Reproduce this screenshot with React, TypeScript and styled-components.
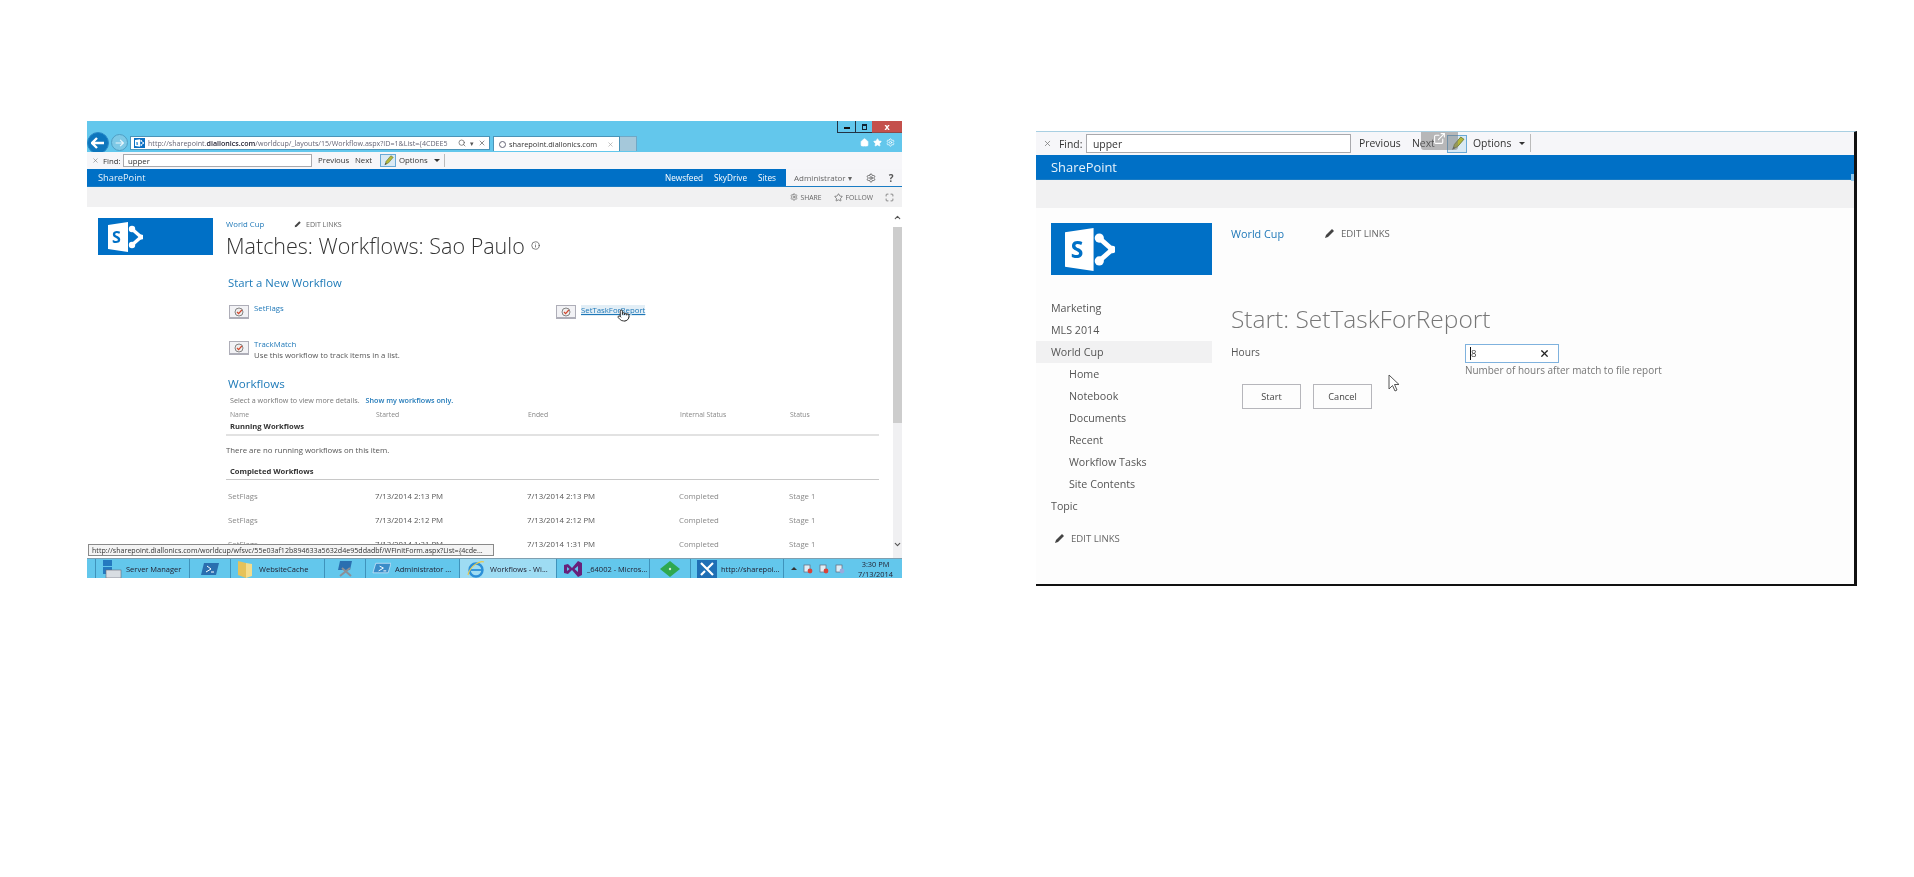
import React from 'react';
import styled, { createGlobalStyle } from 'styled-components';
import { Home, Star, Settings, Search, X, Pointer, ChevronUp, ChevronDown, Info, Maximize, ExternalLink } from 'lucide-react';

const GlobalStyle = createGlobalStyle`
  html, body {
    margin: 0;
    padding: 0;
    background: #fff;
  }
  * {
    box-sizing: border-box;
  }
`;

const Page = styled.div`
  width: 1914px;
  height: 877px;
  overflow: hidden;
  display: flex;
  align-items: flex-start;
  gap: 134px;
  padding: 121px 0 0 87px;
  font-family: 'Open Sans', 'Liberation Sans', sans-serif;
  color: #444;
`;

const LeftShot = styled.div`
  position: relative;
  width: 815px;
  height: 457px;
  flex: none;
  display: flex;
  flex-direction: column;
  overflow: hidden;
  background: #fff;
  filter: blur(0.3px);
`;

const RightShot = styled.div`
  position: relative;
  width: 821px;
  height: 455px;
  margin-top: 10px;
  flex: none;
  display: flex;
  flex-direction: column;
  overflow: hidden;
  background: #fdfdfd;
  border-top: 1px solid #a9cfe2;
  border-right: 3px solid #111;
  border-bottom: 2px solid #111;
  filter: blur(0.3px);
`;

/* browser chrome */
const Chrome = styled.div`
  height: 31px;
  flex: none;
  background: #63c7ec;
  display: flex;
  flex-direction: column;
`;

const CaptionRow = styled.div`
  height: 12px;
  display: flex;
  justify-content: flex-end;
`;

const WinButton = styled.div<{ $width: number; $close?: boolean }>`
  width: ${(p) => p.$width}px;
  height: 12px;
  display: flex;
  align-items: center;
  justify-content: center;
  font-size: 9px;
  font-weight: 700;
  color: ${(p) => (p.$close ? '#fff' : '#111')};
  background: ${(p) => (p.$close ? '#c4504c' : 'transparent')};
  border-left: ${(p) => (p.$close ? 'none' : '1px solid #234')};
  border-bottom: 1px solid ${(p) => (p.$close ? '#8d4a4a' : '#234')};
`;

const MinGlyph = styled.span`
  width: 6px;
  height: 2px;
  margin-top: 3px;
  background: #111;
`;

const RestoreGlyph = styled.span`
  width: 5px;
  height: 6px;
  border: 1px solid #123;
  border-top-width: 2px;
`;

const NavRow = styled.div`
  height: 19px;
  display: flex;
  align-items: center;
`;

const BackCircle = styled.div`
  width: 22px;
  height: 22px;
  margin: 0 2px 0 0;
  border-radius: 50%;
  background: #0d76bd;
  border: 1px solid #2a8ac8;
  color: #fff;
  display: flex;
  align-items: center;
  justify-content: center;
  flex: none;
`;

const ForwardCircle = styled.div`
  width: 17px;
  height: 17px;
  border-radius: 50%;
  background: #7ec9e6;
  border: 1px solid #4f9fc4;
  color: #d8f0fa;
  display: flex;
  align-items: center;
  justify-content: center;
  flex: none;
  margin-right: 2px;
`;

const AddressBar = styled.div`
  width: 360px;
  height: 14px;
  flex: none;
  background: #fff;
  border: 1px solid #4b94b8;
  display: flex;
  align-items: center;
  gap: 1px;
  padding: 0 3px;
  font-size: 7.1px;
  color: #667;
  white-space: nowrap;
  overflow: hidden;
`;

const AddressText = styled.span`
  flex: 1;
  overflow: hidden;
  b {
    color: #223;
    font-weight: 600;
  }
`;

const AddressTools = styled.span`
  display: flex;
  align-items: center;
  gap: 4px;
  color: #555;
`;

const BrowserTab = styled.div`
  width: 127px;
  height: 15px;
  margin: 2px 0 0 3px;
  flex: none;
  background: #fff;
  border: 1px solid #4b94b8;
  border-bottom: none;
  display: flex;
  align-items: center;
  padding: 0 5px;
  gap: 3px;
  font-size: 7.4px;
  color: #333;
  white-space: nowrap;
`;

const TabClose = styled.span`
  margin-left: auto;
  color: #999;
  display: flex;
`;

const Spinner = styled.span`
  width: 7px;
  height: 7px;
  border: 1px solid #667;
  border-radius: 50%;
`;

const NewTab = styled.div`
  width: 17px;
  height: 15px;
  margin-top: 2px;
  flex: none;
  background: #a5c8da;
  border: 1px solid #6fa8c6;
  border-bottom: none;
  border-left: none;
`;

const ChromeIcons = styled.div`
  margin-left: auto;
  display: flex;
  gap: 4px;
  padding-right: 7px;
  color: #fff;
`;

/* find bar */
const FindRow = styled.div<{ $big?: boolean }>`
  height: ${(p) => (p.$big ? 23 : 17)}px;
  flex: none;
  background: #f6f6f9;
  display: flex;
  align-items: center;
  padding-left: ${(p) => (p.$big ? 7 : 5)}px;
  font-size: ${(p) => (p.$big ? 10.4 : 7.8)}px;
  color: #333;
  white-space: nowrap;
`;

const FindClose = styled.span<{ $big?: boolean }>`
  width: ${(p) => (p.$big ? 16 : 11)}px;
  color: #777;
  display: flex;
`;

const FindLabel = styled.span<{ $big?: boolean }>`
  width: ${(p) => (p.$big ? 27 : 20)}px;
`;

const FindInput = styled.div<{ $big?: boolean }>`
  width: ${(p) => (p.$big ? 265 : 189)}px;
  height: ${(p) => (p.$big ? 19 : 13)}px;
  margin-right: ${(p) => (p.$big ? 8 : 6)}px;
  background: #fff;
  border: 1px solid #a9a9ad;
  display: flex;
  align-items: center;
  padding-left: ${(p) => (p.$big ? 6 : 4)}px;
`;

const FindAction = styled.span<{ $width: number }>`
  width: ${(p) => p.$width}px;
  flex: none;
  margin-bottom: 1px;
`;

const PencilButton = styled.span<{ $big?: boolean }>`
  width: ${(p) => (p.$big ? 20 : 16)}px;
  height: ${(p) => (p.$big ? 18 : 13)}px;
  margin-right: ${(p) => (p.$big ? 6 : 3)}px;
  flex: none;
  display: flex;
  align-items: center;
  justify-content: center;
  background: #d9e9f4;
  border: 1px solid #6aa9d6;
`;

const OptionsLabel = styled.span<{ $big?: boolean }>`
  display: flex;
  align-items: center;
  gap: ${(p) => (p.$big ? 8 : 6)}px;
  padding-right: ${(p) => (p.$big ? 5 : 4)}px;
  height: ${(p) => (p.$big ? 18 : 13)}px;
  margin-bottom: 1px;
  border-right: 1px solid #bbb;
`;

const Caret = styled.span<{ $up?: boolean }>`
  width: 0;
  height: 0;
  border-left: 3px solid transparent;
  border-right: 3px solid transparent;
  ${(p) => (p.$up ? 'border-bottom: 3px solid #333;' : 'border-top: 3px solid #333;')}
`;

/* suite bars */
const SuiteBar = styled.div<{ $big?: boolean }>`
  height: ${(p) => (p.$big ? 25 : 18)}px;
  flex: none;
  background: #0070c6;
  border-bottom: 1px solid #1a7cc4;
  color: #e8f3fb;
  display: flex;
  align-items: stretch;
  padding-left: ${(p) => (p.$big ? 15 : 11)}px;
  font-size: ${(p) => (p.$big ? 12.9 : 9.3)}px;
`;

const SuiteBrand = styled.div`
  display: flex;
  align-items: center;
  flex: 1;
`;

const SuiteLinks = styled.div`
  display: flex;
  align-items: center;
  gap: 11px;
  padding-right: 10px;
  font-size: 8.2px;
  font-weight: 500;
  color: #fff;
`;

const UserArea = styled.div`
  width: 116px;
  background: #f5f5f8;
  color: #666;
  display: flex;
  align-items: center;
  font-size: 8px;
  padding-left: 8px;
`;

const UserTail = styled.span`
  margin-left: 14px;
  display: flex;
  align-items: center;
  gap: 13px;
  color: #555;
  font-weight: 700;
  font-size: 10px;
`;

const GreyBar = styled.div<{ $big?: boolean }>`
  height: ${(p) => (p.$big ? 28 : 20)}px;
  flex: none;
  background: #f1f1f2;
  display: flex;
  align-items: center;
  justify-content: flex-end;
  gap: 12px;
  padding-right: 8px;
  font-size: 6.8px;
  color: #666;
`;

const GreyAction = styled.span`
  display: flex;
  align-items: center;
  gap: 3px;
`;

/* left page content */
const LeftBody = styled.div`
  flex: 1;
  min-height: 0;
  display: flex;
  overflow: hidden;
`;

const LeftAside = styled.div`
  width: 139px;
  flex: none;
  padding: 11px 0 0 11px;
`;

const LogoBox = styled.div<{ $width: number; $height: number; $pad: number }>`
  width: ${(p) => p.$width}px;
  height: ${(p) => p.$height}px;
  padding-left: ${(p) => p.$pad}px;
  background: #0070c6;
  display: flex;
  align-items: center;
`;

const LeftMain = styled.div`
  width: 653px;
  flex: none;
  font-size: 7.8px;
  color: #555;
`;

const Crumbs = styled.div<{ $big?: boolean }>`
  height: ${(p) => (p.$big ? 14 : 12)}px;
  margin-top: ${(p) => (p.$big ? 18 : 11)}px;
  display: flex;
  align-items: center;
  font-size: ${(p) => (p.$big ? 10.8 : 7.8)}px;
  white-space: nowrap;
`;

const CrumbLink = styled.span<{ $width: number }>`
  width: ${(p) => p.$width}px;
  color: #1f78b8;
  font-weight: 500;
  flex: none;
`;

const EditLinks = styled.span<{ $big?: boolean }>`
  display: flex;
  align-items: center;
  gap: ${(p) => (p.$big ? 5 : 4)}px;
  color: #666;
  font-size: ${(p) => (p.$big ? 9.6 : 7)}px;
`;

const PageTitle = styled.h1`
  height: 30px;
  margin: 0;
  display: flex;
  align-items: center;
  gap: 6px;
  font-size: 21.5px;
  font-weight: 300;
  color: #333;
  white-space: nowrap;
`;

const SectionTitle = styled.h2<{ $gap: number; $size: number }>`
  height: 16px;
  margin: ${(p) => p.$gap}px 0 0;
  padding-left: 2px;
  display: flex;
  align-items: center;
  font-size: ${(p) => p.$size}px;
  font-weight: 400;
  color: #1e7ab8;
`;

const WorkflowGrid = styled.div`
  margin-top: 15px;
  padding-left: 3px;
  display: grid;
  grid-template-columns: 327px 1fr;
  grid-template-rows: 36px 28px;
`;

const WorkflowItem = styled.div`
  display: flex;
  gap: 5px;
  align-items: flex-start;
`;

const WorkflowIcon = styled.span`
  width: 20px;
  height: 14px;
  flex: none;
  background: #f2f2f5;
  border: 1px solid #aeaeb8;
  border-bottom-width: 2px;
  display: flex;
  align-items: center;
  justify-content: center;
`;

const WorkflowText = styled.div`
  line-height: 11px;
  font-size: 7.8px;
`;

const WorkflowLink = styled.div<{ $hover?: boolean }>`
  color: #1f78b8;
  margin-top: -2px;
  ${(p) => p.$hover && 'text-decoration: underline; background: #e2eef6; display: inline-block;'}
`;

const Hint = styled.div`
  height: 12px;
  margin-top: 3px;
  padding-left: 4px;
  display: flex;
  align-items: center;
  gap: 6px;
  font-size: 7.2px;
  color: #777;
`;

const HintLink = styled.span`
  color: #1f78b8;
  font-weight: 600;
`;

const HeadRow = styled.div`
  height: 12px;
  margin-top: 2px;
  padding-left: 4px;
  display: grid;
  grid-template-columns: 146px 152px 152px 110px 1fr;
  align-items: center;
  font-size: 6.8px;
  color: #888;
`;

const GroupHead = styled.div<{ $gap: number; $strong?: boolean }>`
  height: ${(p) => (p.$strong ? 16 : 15)}px;
  margin-top: ${(p) => p.$gap}px;
  padding: 0 0 3px 4px;
  display: flex;
  align-items: center;
  font-size: 7.6px;
  font-weight: 700;
  color: #333;
  border-bottom: ${(p) => (p.$strong ? '2px solid #e2e2e2' : '1px solid #c8c8c8')};
`;

const EmptyNote = styled.div`
  height: 12px;
  margin-top: 8px;
  display: flex;
  align-items: center;
  font-size: 7.8px;
  color: #555;
`;

const FlowRows = styled.div`
  margin-top: 4px;
`;

const FlowRow = styled.div`
  height: 24px;
  padding-left: 2px;
  display: grid;
  grid-template-columns: 147px 152px 152px 110px 1fr;
  align-items: center;
  font-size: 7.8px;
  color: #888;
`;

const DateCell = styled.span`
  color: #555;
`;

const ScrollTrack = styled.div`
  width: 9px;
  margin-left: 14px;
  flex: none;
  background: #f0f0f2;
  display: flex;
  flex-direction: column;
  align-items: center;
  color: #555;
`;

const ScrollArrow = styled.div<{ $height: number; $top?: boolean }>`
  height: ${(p) => p.$height}px;
  width: 9px;
  background: ${(p) => (p.$top ? '#fff' : 'transparent')};
  flex: none;
  display: flex;
  align-items: ${(p) => (p.$top ? 'center' : 'flex-start')};
  justify-content: center;
`;

const ScrollThumb = styled.div`
  width: 9px;
  height: 196px;
  background: #cdcdcd;
  flex: none;
`;

const ScrollGap = styled.div`
  flex: 1;
`;

const StatusTip = styled.div`
  position: absolute;
  left: 1px;
  top: 423px;
  width: 406px;
  height: 12px;
  background: #f4f4f4;
  border: 1px solid #8a8a8a;
  padding-left: 3px;
  display: flex;
  align-items: center;
  font-size: 7.1px;
  color: #333;
  white-space: nowrap;
  overflow: hidden;
`;

const HandCursor = styled.div`
  position: absolute;
  left: 530px;
  top: 188px;
  color: #111;
  display: flex;
`;

/* taskbar */
const Taskbar = styled.div`
  height: 20px;
  flex: none;
  background: #63c7ec;
  border-top: 1px solid #7f9fb0;
  padding-left: 8px;
  display: flex;
  font-size: 7.5px;
  color: #223;
  white-space: nowrap;
`;

const TaskItem = styled.div<{ $width: number; $active?: boolean; $solo?: boolean }>`
  width: ${(p) => p.$width}px;
  flex: none;
  display: flex;
  align-items: center;
  justify-content: ${(p) => (p.$solo ? 'center' : 'flex-start')};
  gap: 4px;
  padding-left: ${(p) => (p.$solo ? 0 : 6)}px;
  overflow: hidden;
  border-left: 1px solid #3f93bb;
  background: ${(p) => (p.$active ? '#9edcf3' : 'transparent')};
`;

const Tray = styled.div`
  flex: 1;
  display: flex;
  align-items: center;
  gap: 6px;
  padding-left: 7px;
  border-left: 1px solid #3f93bb;
`;

const Clock = styled.div`
  margin-left: 7px;
  text-align: center;
  line-height: 10px;
  font-size: 7.4px;
`;

/* right page content */
const RightBody = styled.div`
  flex: 1;
  min-height: 0;
  display: flex;
`;

const SideNav = styled.div`
  width: 176px;
  flex: none;
  padding-top: 15px;
`;

const SideLogo = styled.div`
  margin-left: 15px;
`;

const NavList = styled.div`
  margin-top: 22px;
`;

const NavItem = styled.div<{ $sub?: boolean; $on?: boolean }>`
  height: 22px;
  padding-left: ${(p) => (p.$sub ? 33 : 15)}px;
  display: flex;
  align-items: center;
  font-size: 10.7px;
  color: #555;
  background: ${(p) => (p.$on ? '#f1f1f2' : 'transparent')};
`;

const NavEdit = styled.div`
  height: 22px;
  margin-top: 10px;
  padding-left: 18px;
  display: flex;
  align-items: center;
`;

const FormMain = styled.div`
  flex: 1;
  padding-left: 19px;
`;

const FormTitle = styled.h1`
  height: 40px;
  margin: 58px 0 0;
  display: flex;
  align-items: center;
  font-size: 24.5px;
  font-weight: 300;
  color: #777;
  white-space: nowrap;
`;

const FormGrid = styled.div`
  margin-top: 6px;
  display: grid;
  grid-template-columns: 234px 1fr;
  font-size: 10.2px;
  color: #555;
`;

const FieldLabel = styled.div`
  height: 19px;
  margin-top: -2px;
  display: flex;
  align-items: center;
`;

const HoursInput = styled.div`
  width: 94px;
  height: 19px;
  background: #fff;
  border: 1px solid #7fb2de;
  display: flex;
  align-items: center;
  justify-content: space-between;
  padding: 0 8px 0 4px;
  font-size: 9.6px;
  color: #444;
`;

const Caretted = styled.span`
  border-left: 1px solid #111;
`;

const FieldNote = styled.div`
  height: 14px;
  display: flex;
  align-items: center;
  font-size: 9.95px;
  color: #777;
  white-space: nowrap;
`;

const ButtonRow = styled.div`
  margin-top: 7px;
  padding-left: 11px;
  display: flex;
  gap: 12px;
`;

const FormButton = styled.div`
  width: 59px;
  height: 25px;
  background: #fdfdfd;
  border: 1px solid #b6b6bb;
  display: flex;
  align-items: center;
  justify-content: center;
  font-size: 9.2px;
  color: #444;
`;

const PopOut = styled.div`
  position: absolute;
  left: 385px;
  top: 0;
  width: 37px;
  height: 18px;
  background: rgba(120, 120, 120, 0.5);
  color: #fff;
  display: flex;
  justify-content: center;
  border-radius: 0 0 3px 3px;
`;

const ArrowCursor = styled.div`
  position: absolute;
  left: 352px;
  top: 242px;
  display: flex;
`;

const EdgeMark = styled.div`
  position: absolute;
  right: 0;
  top: 42px;
  width: 3px;
  height: 7px;
  background: #8ec8ee;
`;

const SpBadgeBox = styled.span`
  width: 11px;
  height: 10px;
  flex: none;
  background: #0a6fc2;
  display: flex;
  align-items: center;
  justify-content: center;
  margin-right: 2px;
`;

const SpLogo = ({ width, height }: { width: number; height: number }) => (
  <svg width={width} height={height} viewBox="0 0 35 30">
    <polygon points="0,3 20,0 20,30 0,27" fill="#fff" />
    <text x="4" y="21" fontSize="16" fontWeight="700" fontFamily="Open Sans, sans-serif" fill="#0070c6">S</text>
    <path d="M24 7 L33 15 L24 23" fill="none" stroke="#fff" strokeWidth="3.4" />
    <circle cx="24" cy="7" r="3.2" fill="#fff" />
    <circle cx="33" cy="15" r="2.6" fill="#fff" />
    <circle cx="24" cy="23" r="3.2" fill="#fff" />
  </svg>
);

const PencilMark = ({ size }: { size: number }) => (
  <svg width={size} height={size} viewBox="0 0 12 12">
    <path d="M1 11 L2 8 L8 2 L10 4 L4 10 Z" fill="#444" />
  </svg>
);

const Highlighter = ({ size }: { size: number }) => (
  <svg width={size} height={size} viewBox="0 0 14 14">
    <path d="M3 12 L4 8 L10 1 L13 3 L7 10 Z" fill="#b5b83a" stroke="#6c7a2e" strokeWidth="0.8" />
    <path d="M2 13 L3 10 L5 11 Z" fill="#555" />
  </svg>
);

const CheckBadge = () => (
  <svg width="10" height="10" viewBox="0 0 10 10">
    <circle cx="5" cy="5" r="4" fill="#eee" stroke="#777" strokeWidth="0.9" />
    <path d="M3 5 L4.6 6.6 L7.8 3" fill="none" stroke="#d2472e" strokeWidth="1.2" />
  </svg>
);

const ArrowGlyph = () => (
  <svg width="12" height="18" viewBox="0 0 12 18">
    <path d="M1 1 V15 L4.5 11.5 L7 17 L9 16 L6.5 10.5 H11 Z" fill="#fff" stroke="#555" strokeWidth="1" />
  </svg>
);

const ServerIcon = () => (
  <svg width="20" height="18" viewBox="0 0 20 18">
    <rect x="1" y="0" width="9" height="6" fill="#2479c0" />
    <rect x="1" y="7" width="9" height="7" fill="#2479c0" />
    <rect x="4" y="10" width="15" height="8" fill="#d8dde2" stroke="#667" strokeWidth="0.6" />
  </svg>
);

const PsIcon = () => (
  <svg width="18" height="14" viewBox="0 0 18 14">
    <polygon points="3,1 18,1 15,13 0,13" fill="#2a6fb0" />
    <path d="M6 4 L10 7 L5 10 M10 10 H13" fill="none" stroke="#fff" strokeWidth="1" />
  </svg>
);

const FolderIcon = () => (
  <svg width="18" height="18" viewBox="0 0 18 18">
    <polygon points="1,1 9,3 9,18 1,15" fill="#e5c25a" />
    <polygon points="9,3 15,4 15,16 9,18" fill="#f4dc8c" />
  </svg>
);

const ToolIcon = () => (
  <svg width="18" height="18" viewBox="0 0 18 18">
    <polygon points="4,1 16,1 14,10 2,10" fill="#2a6fb0" />
    <path d="M4 16 L14 8 M6 8 L15 16" stroke="#8a8f96" strokeWidth="2" />
  </svg>
);

const AdminIcon = () => (
  <svg width="19" height="14" viewBox="0 0 20 14">
    <polygon points="4,1 20,1 17,11 1,11" fill="#3a8cc8" stroke="#dfefff" strokeWidth="0.7" />
    <path d="M8 4 L12 6 L7 9 M12 9 H15" fill="none" stroke="#fff" strokeWidth="1" />
  </svg>
);

const IeIcon = () => (
  <svg width="20" height="18" viewBox="0 0 20 18">
    <circle cx="10" cy="10" r="6.5" fill="none" stroke="#2b8fd8" strokeWidth="2.4" />
    <path d="M4 10 H16" stroke="#2b8fd8" strokeWidth="1.8" />
    <path d="M2 15 C4 6 14 0 18 2" fill="none" stroke="#e9c94e" strokeWidth="1.2" />
  </svg>
);

const VsIcon = () => (
  <svg width="20" height="16" viewBox="0 0 20 16">
    <path d="M1 4 L5 3 L9 7 L15 0 L19 2 V14 L15 16 L9 9 L5 13 L1 12 Z M4 6 V10 L6.5 8 Z M15 5 L11.5 8 L15 11 Z" fill="#68217a" fillRule="evenodd" />
  </svg>
);

const GreenIcon = () => (
  <svg width="20" height="16" viewBox="0 0 20 16">
    <polygon points="10,0 20,8 10,16 0,8" fill="#2fa84f" />
    <circle cx="10" cy="8" r="1.2" fill="#cfeccf" />
  </svg>
);

const WrenchIcon = () => (
  <svg width="20" height="18" viewBox="0 0 20 18">
    <rect width="20" height="18" fill="#1f6fb5" />
    <path d="M4 3 L16 15 M16 3 L10 9 M4 15 L8 11" stroke="#fff" strokeWidth="2.2" />
  </svg>
);

const TrayIcon = ({ color }: { color: string }) => (
  <svg width="10" height="10" viewBox="0 0 10 10">
    <rect x="1" y="1" width="6" height="7" fill="#dfeef6" stroke="#667" strokeWidth="0.7" />
    <circle cx="7" cy="7" r="2.4" fill={color} />
  </svg>
);

const FindToolbar = ({ big }: { big?: boolean }) => (
  <FindRow $big={big}>
    <FindClose $big={big}><X size={big ? 9 : 7} /></FindClose>
    <FindLabel $big={big}>Find:</FindLabel>
    <FindInput $big={big}>upper</FindInput>
    <FindAction $width={big ? 53 : 37}>Previous</FindAction>
    <FindAction $width={big ? 35 : 25}>Next</FindAction>
    <PencilButton $big={big}><Highlighter size={big ? 15 : 11} /></PencilButton>
    <OptionsLabel $big={big}>Options <Caret /></OptionsLabel>
  </FindRow>
);

const completed = [
  { ended: '7/13/2014 2:13 PM' },
  { ended: '7/13/2014 2:12 PM' },
  { ended: '7/13/2014 1:31 PM' },
];

const App = () => {
  return (
    <Page>
      <GlobalStyle />
      <LeftShot>
        <Chrome>
          <CaptionRow>
            <WinButton $width={18}><MinGlyph /></WinButton>
            <WinButton $width={17}><RestoreGlyph /></WinButton>
            <WinButton $width={30} $close>x</WinButton>
          </CaptionRow>
          <NavRow>
            <BackCircle>
              <svg width="14" height="12" viewBox="0 0 14 12"><path d="M6 1 L1 6 L6 11 M1 6 H13" fill="none" stroke="#fff" strokeWidth="2.4" /></svg>
            </BackCircle>
            <ForwardCircle>
              <svg width="9" height="8" viewBox="0 0 14 12"><path d="M8 1 L13 6 L8 11 M13 6 H1" fill="none" stroke="#e8f6fc" strokeWidth="1.8" /></svg>
            </ForwardCircle>
            <AddressBar>
              <SpBadgeBox><SpLogo width={9} height={8} /></SpBadgeBox>
              <AddressText>http://sharepoint.<b>diallonics.com</b>/worldcup/_layouts/15/Workflow.aspx?ID=1&amp;List={'{'}4CDEE5</AddressText>
              <AddressTools><Search size={8} />▾<X size={8} /></AddressTools>
            </AddressBar>
            <BrowserTab>
              <Spinner />
              sharepoint.diallonics.com
              <TabClose><X size={7} /></TabClose>
            </BrowserTab>
            <NewTab />
            <ChromeIcons>
              <Home size={9} fill="#fff" />
              <Star size={9} fill="#fff" />
              <Settings size={9} />
            </ChromeIcons>
          </NavRow>
        </Chrome>
        <FindToolbar />
        <SuiteBar>
          <SuiteBrand>SharePoint</SuiteBrand>
          <SuiteLinks>
            <span>Newsfeed</span>
            <span>SkyDrive</span>
            <span>Sites</span>
          </SuiteLinks>
          <UserArea>
            Administrator ▾
            <UserTail>
              <Settings size={10} />
              ?
            </UserTail>
          </UserArea>
        </SuiteBar>
        <GreyBar>
          <GreyAction><Settings size={8} />SHARE</GreyAction>
          <GreyAction><Star size={9} />FOLLOW</GreyAction>
          <Maximize size={9} />
        </GreyBar>
        <LeftBody>
          <LeftAside>
            <LogoBox $width={115} $height={37} $pad={10}>
              <SpLogo width={35} height={30} />
            </LogoBox>
          </LeftAside>
          <LeftMain>
            <Crumbs>
              <CrumbLink $width={68}>World Cup</CrumbLink>
              <EditLinks><PencilMark size={8} /> EDIT LINKS</EditLinks>
            </Crumbs>
            <PageTitle>Matches: Workflows: Sao Paulo <Info size={9} color="#555" /></PageTitle>
            <SectionTitle $gap={14} $size={11.3}>Start a New Workflow</SectionTitle>
            <WorkflowGrid>
              <WorkflowItem>
                <WorkflowIcon><CheckBadge /></WorkflowIcon>
                <WorkflowText><WorkflowLink>SetFlags</WorkflowLink></WorkflowText>
              </WorkflowItem>
              <WorkflowItem>
                <WorkflowIcon><CheckBadge /></WorkflowIcon>
                <WorkflowText><WorkflowLink $hover>SetTaskForReport</WorkflowLink></WorkflowText>
              </WorkflowItem>
              <WorkflowItem>
                <WorkflowIcon><CheckBadge /></WorkflowIcon>
                <WorkflowText>
                  <WorkflowLink>TrackMatch</WorkflowLink>
                  Use this workflow to track items in a list.
                </WorkflowText>
              </WorkflowItem>
            </WorkflowGrid>
            <SectionTitle $gap={6} $size={11.6}>Workflows</SectionTitle>
            <Hint>
              Select a workflow to view more details.
              <HintLink>Show my workflows only.</HintLink>
            </Hint>
            <HeadRow>
              <span>Name</span>
              <span>Started</span>
              <span>Ended</span>
              <span>Internal Status</span>
              <span>Status</span>
            </HeadRow>
            <GroupHead $gap={0} $strong>Running Workflows</GroupHead>
            <EmptyNote>There are no running workflows on this item.</EmptyNote>
            <GroupHead $gap={9}>Completed Workflows</GroupHead>
            <FlowRows>
              {completed.map((row) => (
                <FlowRow key={row.ended}>
                  <span>SetFlags</span>
                  <DateCell>{row.ended}</DateCell>
                  <DateCell>{row.ended}</DateCell>
                  <span>Completed</span>
                  <span>Stage 1</span>
                </FlowRow>
              ))}
            </FlowRows>
          </LeftMain>
          <ScrollTrack>
            <ScrollArrow $height={20} $top><ChevronUp size={9} strokeWidth={3} /></ScrollArrow>
            <ScrollThumb />
            <ScrollGap />
            <ScrollArrow $height={18}><ChevronDown size={9} strokeWidth={3} /></ScrollArrow>
          </ScrollTrack>
        </LeftBody>
        <Taskbar>
          <TaskItem $width={94}><ServerIcon />Server Manager</TaskItem>
          <TaskItem $width={41} $solo><PsIcon /></TaskItem>
          <TaskItem $width={94}><FolderIcon />WebsiteCache</TaskItem>
          <TaskItem $width={41} $solo><ToolIcon /></TaskItem>
          <TaskItem $width={94}><AdminIcon />Administrator ...</TaskItem>
          <TaskItem $width={97} $active><IeIcon />Workflows - Wi...</TaskItem>
          <TaskItem $width={93}><VsIcon />_64002 - Micros...</TaskItem>
          <TaskItem $width={41} $solo><GreenIcon /></TaskItem>
          <TaskItem $width={93}><WrenchIcon />http://sharepoi...</TaskItem>
          <Tray>
            <Caret $up />
            <TrayIcon color="#d8433a" />
            <TrayIcon color="#d8433a" />
            <TrayIcon color="#9ad" />
            <Clock>3:30 PM<br />7/13/2014</Clock>
          </Tray>
        </Taskbar>
        <StatusTip>http://sharepoint.diallonics.com/worldcup/wfsvc/55e03af12b894633a5632d4e95ddadbf/WFInitForm.aspx?List={'{'}4cde...</StatusTip>
        <HandCursor><Pointer size={13} fill="#fff" strokeWidth={1.6} /></HandCursor>
      </LeftShot>

      <RightShot>
        <FindToolbar big />
        <SuiteBar $big>
          <SuiteBrand>SharePoint</SuiteBrand>
        </SuiteBar>
        <GreyBar $big />
        <RightBody>
          <SideNav>
            <SideLogo>
              <LogoBox $width={161} $height={52} $pad={14}>
                <SpLogo width={50} height={43} />
              </LogoBox>
            </SideLogo>
            <NavList>
              <NavItem>Marketing</NavItem>
              <NavItem>MLS 2014</NavItem>
              <NavItem $on>World Cup</NavItem>
              <NavItem $sub>Home</NavItem>
              <NavItem $sub>Notebook</NavItem>
              <NavItem $sub>Documents</NavItem>
              <NavItem $sub>Recent</NavItem>
              <NavItem $sub>Workflow Tasks</NavItem>
              <NavItem $sub>Site Contents</NavItem>
              <NavItem>Topic</NavItem>
            </NavList>
            <NavEdit>
              <EditLinks $big><PencilMark size={12} /> EDIT LINKS</EditLinks>
            </NavEdit>
          </SideNav>
          <FormMain>
            <Crumbs $big>
              <CrumbLink $width={93}>World Cup</CrumbLink>
              <EditLinks $big><PencilMark size={12} /> EDIT LINKS</EditLinks>
            </Crumbs>
            <FormTitle>Start: SetTaskForReport</FormTitle>
            <FormGrid>
              <FieldLabel>Hours</FieldLabel>
              <div>
                <HoursInput><Caretted>8</Caretted><X size={11} color="#222" strokeWidth={2.6} /></HoursInput>
                <FieldNote>Number of hours after match to file report</FieldNote>
              </div>
            </FormGrid>
            <ButtonRow>
              <FormButton>Start</FormButton>
              <FormButton>Cancel</FormButton>
            </ButtonRow>
          </FormMain>
        </RightBody>
        <PopOut><ExternalLink size={13} /></PopOut>
        <ArrowCursor><ArrowGlyph /></ArrowCursor>
        <EdgeMark />
      </RightShot>
    </Page>
  );
};

export default App;
